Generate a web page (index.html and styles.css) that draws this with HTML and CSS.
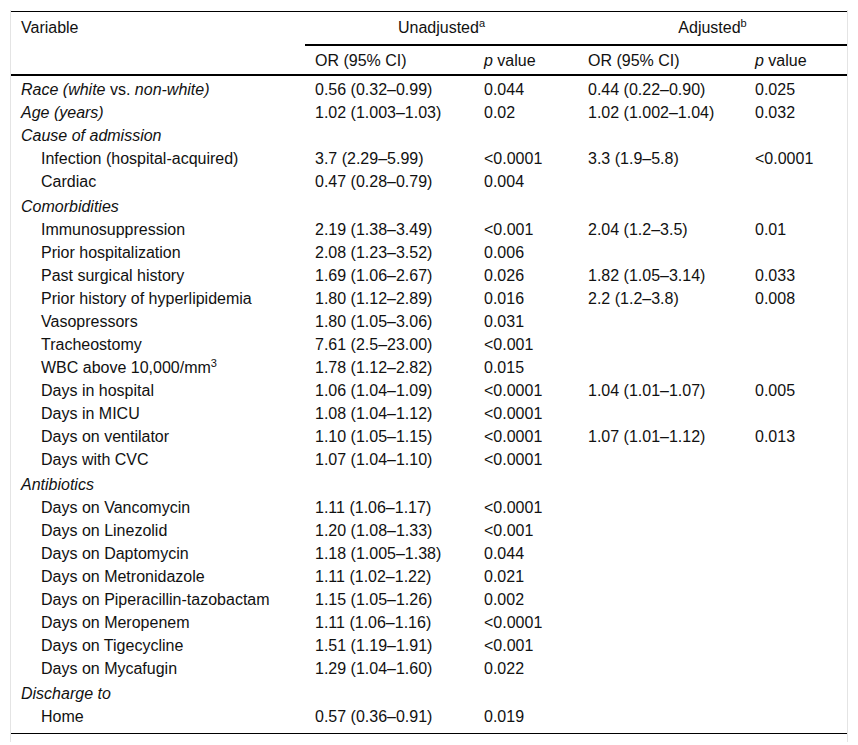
FILE: index.html
```html
<!DOCTYPE html>
<html lang="en">
<head>
<meta charset="utf-8">
<title>Table</title>
<link rel="stylesheet" href="styles.css">
</head>
<body>
<div class="table-wrap">
<table class="data">
<colgroup>
<col class="c1"><col class="c2"><col class="c3"><col class="c4"><col class="c5">
</colgroup>
<thead>
<tr class="h1">
<th rowspan="2" class="var">Variable</th>
<th colspan="2" class="group">Unadjusted<sup>a</sup></th>
<th colspan="2" class="group">Adjusted<sup>b</sup></th>
</tr>
<tr class="h2">
<th>OR (95% CI)</th>
<th><i>p</i> value</th>
<th>OR (95% CI)</th>
<th><i>p</i> value</th>
</tr>
</thead>
<tbody>
<tr class="first"><td><i>Race (white</i> vs. <i>non-white)</i></td><td>0.56 (0.32–0.99)</td><td>0.044</td><td>0.44 (0.22–0.90)</td><td>0.025</td></tr>
<tr><td><i>Age (years)</i></td><td>1.02 (1.003–1.03)</td><td>0.02</td><td>1.02 (1.002–1.04)</td><td>0.032</td></tr>
<tr><td><i>Cause of admission</i></td><td></td><td></td><td></td><td></td></tr>
<tr><td class="ind">Infection (hospital-acquired)</td><td>3.7 (2.29–5.99)</td><td>&lt;0.0001</td><td>3.3 (1.9–5.8)</td><td>&lt;0.0001</td></tr>
<tr><td class="ind">Cardiac</td><td>0.47 (0.28–0.79)</td><td>0.004</td><td></td><td></td></tr>
<tr class="sec"><td><i>Comorbidities</i></td><td></td><td></td><td></td><td></td></tr>
<tr><td class="ind">Immunosuppression</td><td>2.19 (1.38–3.49)</td><td>&lt;0.001</td><td>2.04 (1.2–3.5)</td><td>0.01</td></tr>
<tr><td class="ind">Prior hospitalization</td><td>2.08 (1.23–3.52)</td><td>0.006</td><td></td><td></td></tr>
<tr><td class="ind">Past surgical history</td><td>1.69 (1.06–2.67)</td><td>0.026</td><td>1.82 (1.05–3.14)</td><td>0.033</td></tr>
<tr><td class="ind">Prior history of hyperlipidemia</td><td>1.80 (1.12–2.89)</td><td>0.016</td><td>2.2 (1.2–3.8)</td><td>0.008</td></tr>
<tr><td class="ind">Vasopressors</td><td>1.80 (1.05–3.06)</td><td>0.031</td><td></td><td></td></tr>
<tr><td class="ind">Tracheostomy</td><td>7.61 (2.5–23.00)</td><td>&lt;0.001</td><td></td><td></td></tr>
<tr><td class="ind">WBC above 10,000/mm<sup>3</sup></td><td>1.78 (1.12–2.82)</td><td>0.015</td><td></td><td></td></tr>
<tr><td class="ind">Days in hospital</td><td>1.06 (1.04–1.09)</td><td>&lt;0.0001</td><td>1.04 (1.01–1.07)</td><td>0.005</td></tr>
<tr><td class="ind">Days in MICU</td><td>1.08 (1.04–1.12)</td><td>&lt;0.0001</td><td></td><td></td></tr>
<tr><td class="ind">Days on ventilator</td><td>1.10 (1.05–1.15)</td><td>&lt;0.0001</td><td>1.07 (1.01–1.12)</td><td>0.013</td></tr>
<tr><td class="ind">Days with CVC</td><td>1.07 (1.04–1.10)</td><td>&lt;0.0001</td><td></td><td></td></tr>
<tr class="sec"><td><i>Antibiotics</i></td><td></td><td></td><td></td><td></td></tr>
<tr><td class="ind">Days on Vancomycin</td><td>1.11 (1.06–1.17)</td><td>&lt;0.0001</td><td></td><td></td></tr>
<tr><td class="ind">Days on Linezolid</td><td>1.20 (1.08–1.33)</td><td>&lt;0.001</td><td></td><td></td></tr>
<tr><td class="ind">Days on Daptomycin</td><td>1.18 (1.005–1.38)</td><td>0.044</td><td></td><td></td></tr>
<tr><td class="ind">Days on Metronidazole</td><td>1.11 (1.02–1.22)</td><td>0.021</td><td></td><td></td></tr>
<tr><td class="ind">Days on Piperacillin-tazobactam</td><td>1.15 (1.05–1.26)</td><td>0.002</td><td></td><td></td></tr>
<tr><td class="ind">Days on Meropenem</td><td>1.11 (1.06–1.16)</td><td>&lt;0.0001</td><td></td><td></td></tr>
<tr><td class="ind">Days on Tigecycline</td><td>1.51 (1.19–1.91)</td><td>&lt;0.001</td><td></td><td></td></tr>
<tr><td class="ind">Days on Mycafugin</td><td>1.29 (1.04–1.60)</td><td>0.022</td><td></td><td></td></tr>
<tr class="sec"><td><i>Discharge to</i></td><td></td><td></td><td></td><td></td></tr>
<tr class="last"><td class="ind">Home</td><td>0.57 (0.36–0.91)</td><td>0.019</td><td></td><td></td></tr>
</tbody>
</table>
</div>
</body>
</html>
```

FILE: styles.css
```css
html, body {
  margin: 0;
  padding: 0;
  background: #fff;
}

body {
  padding: 10px 10px 3px 10px;
  font-family: "Liberation Sans", Arial, sans-serif;
  font-size: 16px;
  color: #111;
}

.table-wrap {
  border-left: 1px solid #e4e4e4;
  border-right: 1px solid #e4e4e4;
  padding: 1px 0 8px 0;
}

.data {
  width: 836px;
  border-collapse: collapse;
  table-layout: fixed;
  border-top: 1px solid #000;
  border-bottom: 1px solid #000;
}

.c1 { width: 294px; }
.c2 { width: 169px; }
.c3 { width: 104px; }
.c4 { width: 167px; }
.c5 { width: 102px; }

.data th,
.data td {
  font-weight: normal;
  text-align: left;
  line-height: 17px;
  padding: 3px 10px;
  vertical-align: top;
  white-space: nowrap;
}

.h1 th {
  padding-top: 7px;
  padding-bottom: 8px;
}

.h1 th.group {
  text-align: center;
  border-bottom: 2px solid #000;
}

.h1 th.var {
  border-bottom: 2px solid #000;
}

.h2 th {
  padding-top: 6px;
  padding-bottom: 5px;
  border-bottom: 2px solid #000;
}

sup {
  font-size: 11px;
  line-height: 0;
  vertical-align: 6px;
}

.data td.ind {
  padding-left: 30px;
}

.first td {
  padding-top: 5px;
}

.sec td {
  padding-top: 5px;
}

.last td {
  padding-bottom: 8px;
}
```
